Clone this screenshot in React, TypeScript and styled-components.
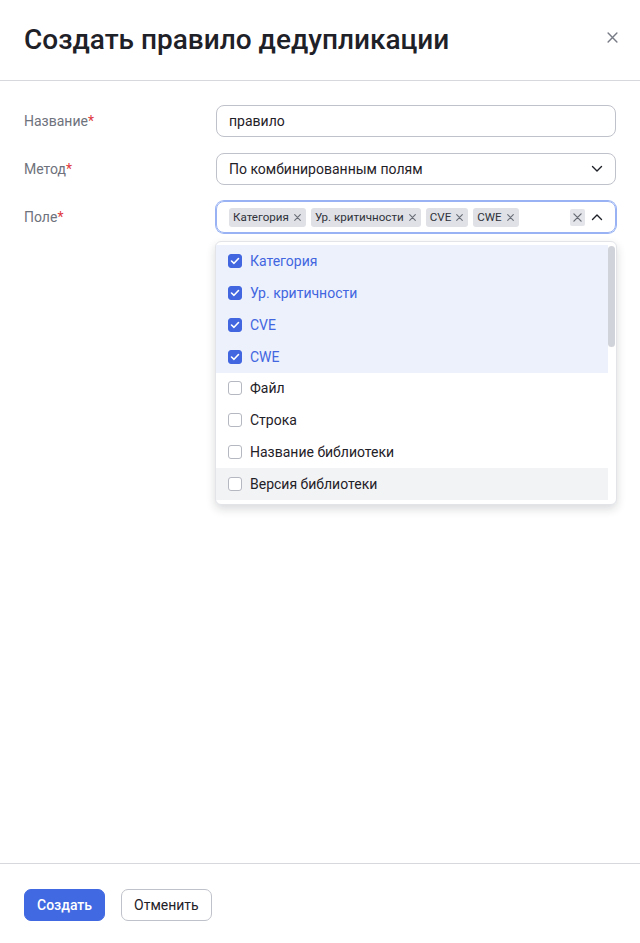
import React from "react";
import styled, { createGlobalStyle } from "styled-components";

const GlobalStyle = createGlobalStyle`
  html, body {
    margin: 0;
    padding: 0;
    background: #fff;
  }
  body {
    font-family: Roboto, "Noto Sans", sans-serif;
    color: #1f2128;
  }
  * { box-sizing: border-box; }
`;

const Modal = styled.div`
  width: 640px;
  height: 943px;
  display: flex;
  flex-direction: column;
  background: #fff;
`;

const Header = styled.header`
  height: 81px;
  display: flex;
  align-items: center;
  justify-content: space-between;
  padding: 0 24px 0 24px;
  border-bottom: 1px solid #d6d8de;
  > h1 {
    margin: 0;
    font-size: 28px;
    font-weight: 500;
    color: #1f2128;
    padding-bottom: 2px;
  }
`;

const CloseButton = styled.button`
  border: none;
  background: none;
  padding: 0;
  width: 20px;
  height: 20px;
  display: flex;
  align-items: center;
  justify-content: center;
  color: #777b85;
  margin-right: -6px;
  margin-top: -5px;
`;

const Body = styled.div`
  flex: 1;
  padding: 24px 24px 0;
  display: flex;
  flex-direction: column;
  gap: 16px;
`;

const Row = styled.div`
  display: grid;
  grid-template-columns: 192px 400px;
  align-items: start;
`;

const Label = styled.label`
  font-size: 14px;
  color: #6e727c;
  line-height: 32px;
  > span {
    color: #e0393e;
  }
`;

const Field = styled.div<{ $focused?: boolean }>`
  position: relative;
  height: 32px;
  border: 1px solid ${(p) => (p.$focused ? "#98b2f3" : "#bfc2ca")};
  box-shadow: ${(p) => (p.$focused ? "0 0 0 1px #98b2f3" : "none")};
  border-radius: 8px;
  display: flex;
  align-items: center;
  padding: 0 12px;
  font-size: 14px;
  color: #1f2128;
  gap: 6px;
`;

const Grow = styled.div`
  flex: 1;
  display: flex;
  gap: 5px;
  align-items: center;
  min-width: 0;
`;

const Tag = styled.span`
  display: inline-flex;
  align-items: center;
  gap: 5px;
  height: 19px;
  padding: 0 5px 0 4px;
  border-radius: 3px;
  background: #dfe1e6;
  font-size: 11.6px;
  color: #2f323a;
  white-space: nowrap;
  > svg { color: #6a6e77; }
`;

const ClearBox = styled.span`
  width: 15px;
  height: 17px;
  display: inline-flex;
  align-items: center;
  justify-content: center;
  background: #e3e5ea;
  border-radius: 2px;
  color: #666a73;
`;

const Menu = styled.div`
  position: absolute;
  top: 39px;
  left: -2px;
  right: -2px;
  height: 264px;
  background: #fff;
  border: 1px solid #e2e4e8;
  border-radius: 6px;
  box-shadow: 0 4px 10px rgba(20, 25, 40, 0.16);
  padding: 3px 0 4px;
  display: flex;
  z-index: 2;
`;

const List = styled.div`
  flex: 1;
  display: flex;
  flex-direction: column;
`;

const Option = styled.div<{ $selected?: boolean; $hover?: boolean }>`
  height: 32px;
  display: flex;
  align-items: center;
  gap: 8px;
  padding: 0 12px;
  font-size: 14px;
  color: ${(p) => (p.$selected ? "#4266e0" : "#1f2128")};
  background: ${(p) =>
    p.$selected ? "#edf1fc" : p.$hover ? "#f2f3f5" : "transparent"};
`;

const Check = styled.span<{ $checked?: boolean }>`
  width: 14px;
  height: 14px;
  border-radius: 3px;
  flex: none;
  display: inline-flex;
  align-items: center;
  justify-content: center;
  background: ${(p) => (p.$checked ? "#4266e0" : "#fff")};
  border: 1px solid ${(p) => (p.$checked ? "#4266e0" : "#b5b8c1")};
`;

const Scrollbar = styled.div`
  width: 8px;
  padding-top: 1px;
  > div {
    width: 7px;
    height: 101px;
    border-radius: 4px;
    background: #d0d3d9;
  }
`;

const Footer = styled.footer`
  height: 80px;
  border-top: 1px solid #d6d8de;
  display: flex;
  align-items: center;
  gap: 16px;
  padding: 2px 24px 0;
`;

const Button = styled.button<{ $primary?: boolean }>`
  height: 32px;
  border-radius: 7px;
  font-family: Roboto, "Noto Sans", sans-serif;
  font-size: 14px;
  padding: 0 12px;
  font-weight: ${(p) => (p.$primary ? 500 : 400)};
  background: ${(p) => (p.$primary ? "#4169e1" : "#fff")};
  color: ${(p) => (p.$primary ? "#fff" : "#1f2128")};
  border: 1px solid ${(p) => (p.$primary ? "#4169e1" : "#bfc2ca")};
`;

const X = ({ size = 8, w = 1.5 }: { size?: number; w?: number }) => (
  <svg width={size} height={size} viewBox="0 0 10 10">
    <path d="M1 1L9 9M9 1L1 9" stroke="currentColor" strokeWidth={w} strokeLinecap="round" />
  </svg>
);

const Chevron = ({ up }: { up?: boolean }) => (
  <svg width="12" height="8" viewBox="0 0 12 8">
    <path
      d={up ? "M1.5 6.5L6 2L10.5 6.5" : "M1.5 1.5L6 6L10.5 1.5"}
      stroke="#1f2128"
      strokeWidth="1.4"
      fill="none"
      strokeLinecap="round"
      strokeLinejoin="round"
    />
  </svg>
);

const Tick = () => (
  <svg width="10" height="8" viewBox="0 0 10 8">
    <path d="M1.5 4L4 6.3L8.5 1.5" stroke="#fff" strokeWidth="1.6" fill="none" strokeLinecap="round" strokeLinejoin="round" />
  </svg>
);

const options = [
  { label: "Категория", checked: true },
  { label: "Ур. критичности", checked: true },
  { label: "CVE", checked: true },
  { label: "CWE", checked: true },
  { label: "Файл" },
  { label: "Строка" },
  { label: "Название библиотеки" },
  { label: "Версия библиотеки", hover: true },
];

const tags = ["Категория", "Ур. критичности", "CVE", "CWE"];

export default function App() {
  return (
    <>
      <GlobalStyle />
      <Modal>
        <Header>
          <h1>Создать правило дедупликации</h1>
          <CloseButton>
            <X size={11} w={1.3} />
          </CloseButton>
        </Header>
        <Body>
          <Row>
            <Label>
              Название<span>*</span>
            </Label>
            <Field>правило</Field>
          </Row>
          <Row>
            <Label>
              Метод<span>*</span>
            </Label>
            <Field>
              <Grow>По комбинированным полям</Grow>
              <Chevron />
            </Field>
          </Row>
          <Row>
            <Label>
              Поле<span>*</span>
            </Label>
            <Field $focused>
              <Grow>
                {tags.map((t) => (
                  <Tag key={t}>
                    {t}
                    <X size={7} w={1.6} />
                  </Tag>
                ))}
              </Grow>
              <ClearBox>
                <X size={9} w={1.4} />
              </ClearBox>
              <Chevron up />
              <Menu>
                <List>
                  {options.map((o) => (
                    <Option key={o.label} $selected={o.checked} $hover={o.hover}>
                      <Check $checked={o.checked}>{o.checked && <Tick />}</Check>
                      {o.label}
                    </Option>
                  ))}
                </List>
                <Scrollbar>
                  <div />
                </Scrollbar>
              </Menu>
            </Field>
          </Row>
        </Body>
        <Footer>
          <Button $primary>Создать</Button>
          <Button>Отменить</Button>
        </Footer>
      </Modal>
    </>
  );
}
